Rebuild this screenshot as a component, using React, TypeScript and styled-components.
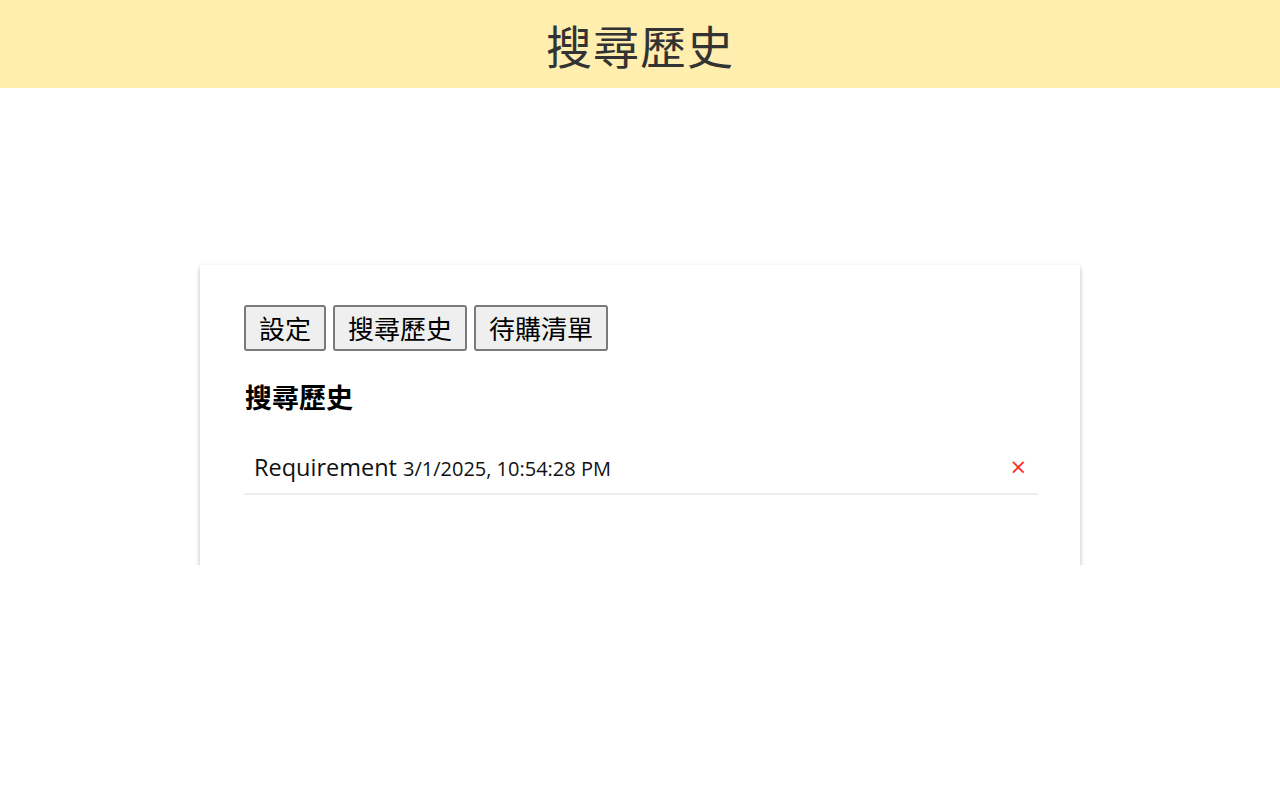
import styled, { createGlobalStyle } from "styled-components";

const Details = {
    Title: "搜尋歷史",
    Tabs: ["設定", "搜尋歷史", "待購清單"],
    History: [
        {
            Keyword: "Requirement",
            Time: "3/1/2025, 10:54:28 PM",
        },
    ],
};

const GlobalStyle = createGlobalStyle`
    body {
        margin: 0;
        background: #fff;
        font-family: "Open Sans", "Noto Sans CJK TC", sans-serif;
    }
`;

const StyledHeader = styled.header`
    height: 88px;
    background-color: #ffeeae;
    display: flex;
    justify-content: center;
    align-items: center;
`;

const StyledTitle = styled.h1`
    margin: 0;
    font-family: "Noto Sans CJK TC", sans-serif;
    font-weight: 400;
    font-size: 46px;
    color: #333;
    letter-spacing: 1px;
`;

const StyledCard = styled.main`
    width: 880px;
    box-sizing: border-box;
    margin: 177px auto 0;
    padding: 40px 42px 70px 44px;
    background: #fff;
    box-shadow: 0 3px 5px rgba(0, 0, 0, 0.25), 0 0 2px rgba(0, 0, 0, 0.06);
`;

const StyledTabs = styled.nav`
    display: flex;
    gap: 7px;
`;

const StyledTab = styled.button`
    font-family: "Noto Sans CJK TC", sans-serif;
    font-size: 26px;
    line-height: 34px;
    padding: 4px 13px;
    color: #000;
    background: #efefef;
    border: 2px solid #7a7a7a;
    border-radius: 3px;
    cursor: pointer;
`;

const StyledHeading = styled.h2`
    margin: 28px 0 26px 1px;
    font-family: "Noto Sans CJK TC", sans-serif;
    font-size: 27px;
    line-height: 36px;
    font-weight: 700;
    color: #000;
`;

const StyledList = styled.ul`
    list-style: none;
    margin: 0;
    padding: 0;
`;

const StyledItem = styled.li`
    display: flex;
    align-items: center;
    justify-content: space-between;
    height: 52px;
    padding: 0 11px 0 10px;
    border-bottom: 2px solid #eee;
`;

const StyledKeyword = styled.span`
    font-size: 23.5px;
    color: #111;
`;

const StyledTime = styled.span`
    font-size: 20px;
    color: #111;
    margin-left: 6px;
`;

const StyledDelete = styled.button`
    border: none;
    background: none;
    color: #ff2a2a;
    font-size: 21px;
    font-family: "DejaVu Sans", sans-serif;
    padding: 0;
    cursor: pointer;
`;

export default function App() {
    return (
        <>
            <GlobalStyle />
            <StyledHeader>
                <StyledTitle>{Details.Title}</StyledTitle>
            </StyledHeader>
            <StyledCard>
                <StyledTabs>
                    {Details.Tabs.map((tab) => (
                        <StyledTab key={tab}>{tab}</StyledTab>
                    ))}
                </StyledTabs>
                <StyledHeading>{Details.Title}</StyledHeading>
                <StyledList>
                    {Details.History.map((item, index) => (
                        <StyledItem key={index}>
                            <div>
                                <StyledKeyword>{item.Keyword}</StyledKeyword>
                                <StyledTime>{item.Time}</StyledTime>
                            </div>
                            <StyledDelete>×</StyledDelete>
                        </StyledItem>
                    ))}
                </StyledList>
            </StyledCard>
        </>
    );
}
